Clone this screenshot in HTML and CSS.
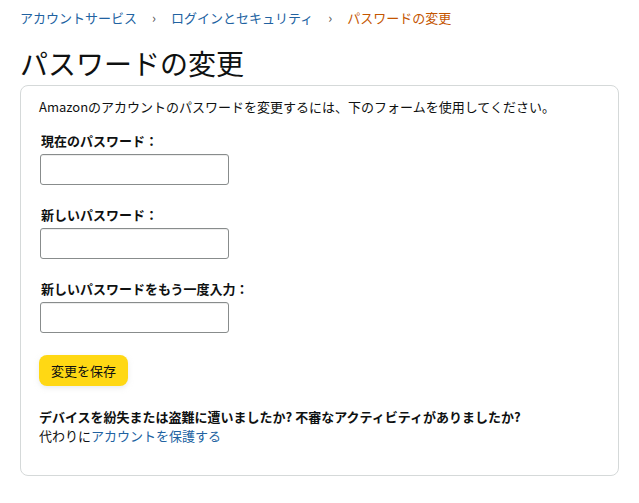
FILE: index.html
```html
<!DOCTYPE html>
<html lang="ja">
<head>
    <meta charset="UTF-8">
    <meta name="viewport" content="width=device-width, initial-scale=1.0">
    <title>パスワードの変更</title>
    <link rel="stylesheet" href="styles.css">
</head>
<body>
    <nav class="breadcrumb">
        <a href="#">アカウントサービス</a>
        <span class="sep">›</span>
        <a href="#">ログインとセキュリティ</a>
        <span class="sep">›</span>
        <span class="current">パスワードの変更</span>
    </nav>

    <h1>パスワードの変更</h1>

    <div class="box">
        <p class="intro">Amazonのアカウントのパスワードを変更するには、下のフォームを使用してください。</p>

        <form class="form">
            <label for="current">現在のパスワード：</label>
            <input type="password" id="current">

            <label for="newpass">新しいパスワード：</label>
            <input type="password" id="newpass">

            <label for="confirm">新しいパスワードをもう一度入力：</label>
            <input type="password" id="confirm">

            <button type="button">変更を保存</button>
        </form>

        <p class="lost">デバイスを紛失または盗難に遭いましたか? 不審なアクティビティがありましたか?</p>
        <p class="protect">代わりに<a href="#">アカウントを保護する</a></p>
    </div>
</body>
</html>
```

FILE: styles.css
```css
body {
    margin: 0;
    padding: 0 20px;
    font-family: "Noto Sans CJK JP", "Noto Sans", "Liberation Sans", sans-serif;
    font-size: 13px;
    line-height: 19px;
    color: #0f1111;
    background: #fff;
}

a {
    color: #2162a1;
    text-decoration: none;
}

.breadcrumb {
    display: flex;
    align-items: center;
    height: 20px;
    padding-top: 7px;
}

.breadcrumb .sep {
    margin: 0 15px;
    color: #555;
}

.breadcrumb .current {
    color: #c45500;
}

h1 {
    margin: 0;
    padding-top: 18px;
    font-size: 28px;
    font-weight: 400;
    line-height: 36px;
}

.box {
    margin-top: 4px;
    padding: 11px 18px 30px;
    border: 1px solid #d5d9d9;
    border-radius: 8px;
}

.intro {
    margin: 0;
}

.form {
    display: flex;
    flex-direction: column;
    align-items: flex-start;
    padding-top: 15px;
}

.form label {
    font-weight: 700;
    padding-left: 2px;
}

.form input {
    width: 189px;
    height: 31px;
    box-sizing: border-box;
    margin: 4px 0 20px 1px;
    border: 1px solid #888c8c;
    border-radius: 3px;
    box-shadow: 0 1px 0 rgba(255, 255, 255, 0.5), 0 1px 0 rgba(0, 0, 0, 0.07) inset;
}

.form button {
    margin-top: 2px;
    height: 31px;
    padding: 0 12px;
    font-family: inherit;
    font-size: 13px;
    color: #0f1111;
    background-color: #ffd814;
    border: none;
    border-radius: 8px;
    box-shadow: 0 2px 5px rgba(213, 217, 217, 0.5);
    cursor: pointer;
}

.lost {
    margin: 21px 0 0;
    font-weight: 700;
}

.protect {
    margin: 0;
}
```
